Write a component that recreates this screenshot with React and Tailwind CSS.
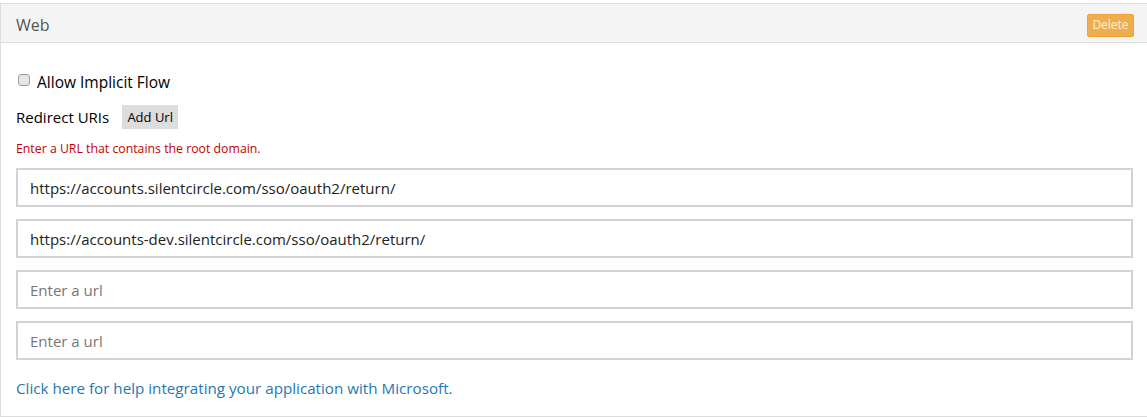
import React from 'react';

const urls = [
    'https://accounts.silentcircle.com/sso/oauth2/return/',
    'https://accounts-dev.silentcircle.com/sso/oauth2/return/',
    '',
    '',
];

const App = () => {
    return (
        <div className="w-[1147px] h-[417px] bg-white pt-[3px] overflow-hidden" style={{ fontFamily: '"Segoe UI", "Open Sans", sans-serif' }}>
            <div className="w-[1150px] border border-[#dddddd] h-[414px]">
                <div className="h-[39px] bg-[#f4f4f4] border-b border-[#dddddd] flex items-center justify-between pl-[15px] pr-[15px]">
                    <span className="text-[16px] text-[#555555] mt-[3px]">Web</span>
                    <button className="w-[47px] h-[23px] bg-[#f0ad4e] border border-[#eea236] rounded-[2px] text-[12px] text-[#fdf0dc] leading-none mt-[4px]">Delete</button>
                </div>
                <div className="pl-[15px] pr-[16px]">
                    <label className="flex items-center mt-[30px] h-[20px]">
                        <input type="checkbox" className="appearance-none w-[12px] h-[12px] ml-[2px] mr-[7px] -mt-[6px] border border-[#9c9c9c] rounded-[3px] bg-[#e6e6e6]" />
                        <span className="text-[15.5px] text-black">Allow Implicit Flow</span>
                    </label>
                    <div className="flex items-center mt-[12px] h-[24px]">
                        <span className="text-[15px] text-black">Redirect URIs</span>
                        <button className="ml-[13px] w-[56px] h-[24px] bg-[#dddddd] text-[13px] text-black leading-none">Add Url</button>
                    </div>
                    <div className="text-[12.3px] text-[#c40000] mt-[11px] h-[18px]">Enter a URL that contains the root domain.</div>
                    <div className="flex flex-col gap-[12px] mt-[10px] w-[1117px]">
                        {urls.map((u, i) => (
                            <input
                                key={i}
                                type="text"
                                defaultValue={u}
                                placeholder="Enter a url"
                                className="h-[39px] border-2 border-[#d3d3d3] px-[12px] text-[15px] text-[#222222] placeholder:text-[#777777] outline-none"
                            />
                        ))}
                    </div>
                    <a href="#" className="block mt-[17px] text-[15.2px] text-[#1e79b5]">Click here for help integrating your application with Microsoft.</a>
                </div>
            </div>
        </div>
    );
};

export default App;
